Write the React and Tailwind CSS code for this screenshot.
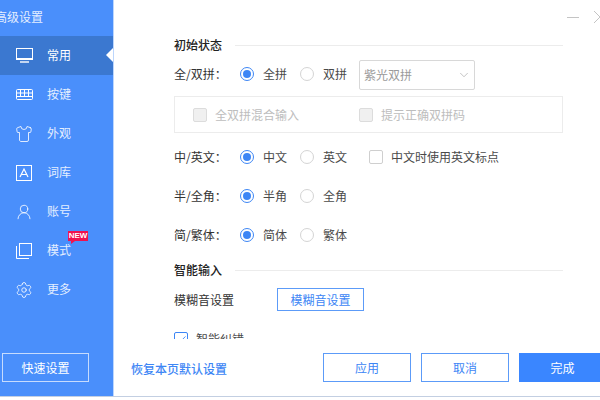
import React from 'react';
import { Shirt, UserRound, Settings, ChevronDown, Check } from 'lucide-react';

const cjk = { fontFamily: '"Noto Sans CJK SC", "Noto Sans", sans-serif' };

function MonitorIcon() {
  return (
    <svg width="17" height="15" viewBox="0 0 17 15" fill="none" stroke="#fff" strokeWidth="1">
      <rect x="0.5" y="0.5" width="16" height="11" />
      <path d="M0 10.5h17" />
      <path d="M4 14h9" strokeWidth="1.4" />
    </svg>
  );
}

function KeyboardIcon() {
  return (
    <svg width="17" height="11" viewBox="0 0 17 11" fill="none" stroke="#fff" strokeWidth="1">
      <rect x="0.5" y="0.5" width="16" height="10" rx="1" />
      <path d="M4.5 1v6M8.5 1v6M12.5 1v6M1 4h15M1 7.5h15" />
    </svg>
  );
}

function LetterIcon() {
  return (
    <svg width="16" height="16" viewBox="0 0 16 16" fill="none" stroke="#fff" strokeWidth="1">
      <rect x="0.5" y="0.5" width="15" height="15" />
      <path d="M4 12 8 4l4 8M5.4 9.5h5.2" strokeWidth="1.2" />
    </svg>
  );
}

function PagesIcon() {
  return (
    <svg width="16" height="16" viewBox="0 0 16 16" fill="none" stroke="#fff" strokeWidth="1">
      <rect x="3.5" y="0.5" width="12" height="12" />
      <path d="M0.5 3v12.5H13" />
    </svg>
  );
}

const navItems = [
  { label: '常用', icon: <MonitorIcon />, active: true },
  { label: '按键', icon: <KeyboardIcon /> },
  { label: '外观', icon: <Shirt size={18} strokeWidth={1.1} color="#fff" /> },
  { label: '词库', icon: <LetterIcon /> },
  { label: '账号', icon: <UserRound size={18} strokeWidth={1.1} color="#fff" /> },
  { label: '模式', icon: <PagesIcon />, badge: true },
  { label: '更多', icon: <Settings size={18} strokeWidth={1.1} color="#fff" /> },
];

function NavItem({ item }) {
  return (
    <div className={`relative flex h-[39px] items-center ${item.active ? 'bg-[#3b78d0]' : ''}`}>
      <span className="flex w-[47px] shrink-0 justify-center pl-[1px]">
        <span className="flex w-[18px] justify-center">{item.icon}</span>
      </span>
      <span className={`pb-[2px] text-[12px] ${item.active ? 'text-white' : 'text-[#e4eeff]'}`}>{item.label}</span>
      {item.active && (
        <span className="absolute right-0 top-[12px] h-0 w-0 border-y-[7px] border-r-[7px] border-y-transparent border-r-white" />
      )}
      {item.badge && (
        <span className="absolute left-[68px] top-0 h-[10px] w-[20px] bg-[#f0124f] text-center text-[8px] font-bold leading-[10px] text-white" style={{ fontFamily: '"Liberation Sans", sans-serif' }}>
          NEW
          <span className="absolute left-[3px] top-[10px] h-0 w-0 border-r-[4px] border-t-[3px] border-r-transparent border-t-[#f0124f]" />
        </span>
      )}
    </div>
  );
}

function Radio({ checked, label }) {
  return (
    <span className="flex items-center">
      <span className={`flex h-[14px] w-[14px] items-center justify-center rounded-full border ${checked ? 'border-[#3d86f5]' : 'border-[#d4d4d4]'}`}>
        {checked && <span className="h-[8px] w-[8px] rounded-full bg-[#3d86f5]" />}
      </span>
      <span className="ml-[9px] text-[12px] text-[#4a4a4a]">{label}</span>
    </span>
  );
}

function OptionRow({ label, first, second, extra }) {
  return (
    <div className="flex h-[20px] items-center">
      <span className="w-[66px] text-[12px] text-[#333]">{label}</span>
      <span className="w-[60px]"><Radio checked label={first} /></span>
      <span className="w-[59px]"><Radio label={second} /></span>
      {extra}
    </div>
  );
}

function SectionTitle({ children }) {
  return (
    <div className="flex h-[16px] items-center">
      <span className="w-[61px] text-[12px] font-medium text-[#222]">{children}</span>
      <span className="h-px w-[328px] bg-[#ececec]" />
    </div>
  );
}

function DisabledCheck({ label, className }) {
  return (
    <span className={`flex items-center ${className}`}>
      <span className="h-[14px] w-[14px] rounded-[2px] border border-[#dcdcdc] bg-[#f0f0f0]" />
      <span className="ml-[8px] text-[12px] text-[#bdbdbd]">{label}</span>
    </span>
  );
}

function OutlineButton({ children, className }) {
  return (
    <button className={`h-[29px] w-[88px] shrink-0 border border-[#5c9bf8] bg-white text-[12px] text-[#3d86f5] ${className}`}>
      {children}
    </button>
  );
}

export default function App() {
  return (
    <div className="h-[400px] w-[600px] overflow-hidden bg-white" style={cjk}>
      <div className="flex h-[397px] border-b border-[#c3cfe2]">
        <aside className="flex w-[114px] shrink-0 flex-col border-r border-[#bcd6fd] bg-[#4a8ffb]">
          <div className="-ml-[5px] h-[36px] pt-[8px] text-[12px] text-[#e4eeff]">高级设置</div>
          {navItems.map((item) => (
            <NavItem key={item.label} item={item} />
          ))}
          <div className="mt-auto pb-[14px] pl-[2px]">
            <button className="h-[29px] w-[87px] border border-[#c7dcfd] text-[12px] text-white">快速设置</button>
          </div>
        </aside>

        <main className="relative flex min-w-0 flex-1 flex-col overflow-hidden">
          <div className="absolute right-0 top-[10px] flex items-center gap-[15px]">
            <span className="h-px w-[12px] bg-[#c4c4c4]" />
            <svg width="6" height="14" viewBox="0 0 6 14" fill="none" stroke="#c4c4c4"><path d="M0 1l6 6-6 6" /></svg>
          </div>

          <div className="h-[339px] overflow-hidden pl-[60px] pt-[37px]">
            <SectionTitle>初始状态</SectionTitle>
            <div className="mt-[11px]">
              <OptionRow
                label="全/双拼："
                first="全拼"
                second="双拼"
                extra={
                  <span className="mt-[2px] flex h-[30px] w-[116px] items-center justify-between rounded-[2px] border border-[#d8d8d8] pl-[4px] pr-[3px] text-[12px] text-[#9a9a9a]">
                    紫光双拼
                    <ChevronDown size={14} strokeWidth={1} color="#999" />
                  </span>
                }
              />
            </div>
            <div className="mt-[12px] flex h-[37px] w-[389px] items-center border border-[#ececec] pl-[18px]">
              <DisabledCheck label="全双拼混合输入" className="w-[166px]" />
              <DisabledCheck label="提示正确双拼码" />
            </div>
            <div className="mt-[14px]">
              <OptionRow
                label="中/英文："
                first="中文"
                second="英文"
                extra={
                  <span className="ml-[10px] flex items-center">
                    <span className="h-[14px] w-[14px] rounded-[2px] border border-[#cfcfcf]" />
                    <span className="ml-[8px] text-[12px] text-[#4a4a4a]">中文时使用英文标点</span>
                  </span>
                }
              />
            </div>
            <div className="mt-[19px]">
              <OptionRow label="半/全角：" first="半角" second="全角" />
            </div>
            <div className="mt-[19px]">
              <OptionRow label="简/繁体：" first="简体" second="繁体" />
            </div>
            <div className="mt-[17px]">
              <SectionTitle>智能输入</SectionTitle>
            </div>
            <div className="mt-[10px] flex h-[23px] items-center">
              <span className="w-[103px] text-[12px] text-[#333]">模糊音设置</span>
              <button className="h-[23px] w-[87px] border border-[#5c9bf8] text-[12px] text-[#3d86f5]">模糊音设置</button>
            </div>
            <div className="mt-[19px] flex items-center">
              <span className="flex h-[14px] w-[14px] items-center justify-center rounded-[2px] border border-[#3d86f5]">
                <Check size={11} strokeWidth={2} color="#3d86f5" />
              </span>
              <span className="ml-[8px] text-[12px] text-[#4a4a4a]">智能纠错</span>
            </div>
          </div>

          <div className="mt-[14px] flex h-[29px] items-center pl-[17px]">
            <a className="w-[192px] shrink-0 pt-[3px] text-[12px] font-medium text-[#3d86f5]">恢复本页默认设置</a>
            <OutlineButton>应用</OutlineButton>
            <OutlineButton className="ml-[10px]">取消</OutlineButton>
            <button className="ml-[10px] h-[29px] w-[87px] shrink-0 bg-[#3a86ff] text-[12px] text-white">完成</button>
          </div>
        </main>
      </div>
    </div>
  );
}
